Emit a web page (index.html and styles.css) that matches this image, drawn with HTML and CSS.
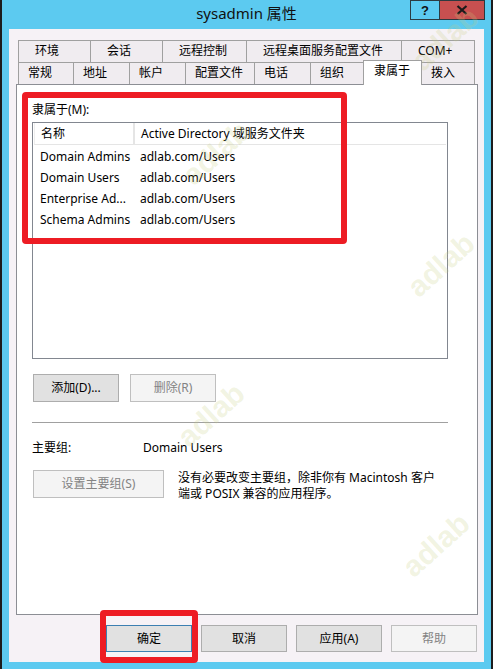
FILE: index.html
```html
<!DOCTYPE html>
<html lang="zh-CN">
<head>
<meta charset="utf-8">
<title>sysadmin 属性</title>
<link rel="stylesheet" href="styles.css">
</head>
<body>
<div class="window">
  <div class="titlebar">
    <div></div>
    <div class="title">sysadmin 属性</div>
    <div class="tbtns">
      <div class="tbtn help">?</div>
      <div class="tbtn close">
        <svg width="12" height="10" viewBox="0 0 12 10"><path d="M1.5 1 L10.5 9 M10.5 1 L1.5 9" stroke="#1a1a1a" stroke-width="2.2" fill="none"/></svg>
      </div>
    </div>
  </div>
  <div class="dialog">
    <div class="tabs">
      <div class="tabrow row1">
        <div class="tab">环境</div>
        <div class="tab">会话</div>
        <div class="tab">远程控制</div>
        <div class="tab">远程桌面服务配置文件</div>
        <div class="tab last">COM+</div>
      </div>
      <div class="tabrow row2">
        <div class="tab">常规</div>
        <div class="tab">地址</div>
        <div class="tab">帐户</div>
        <div class="tab">配置文件</div>
        <div class="tab">电话</div>
        <div class="tab">组织</div>
        <div class="tab active">隶属于</div>
        <div class="tab last">拨入</div>
      </div>
    </div>
    <div class="panel">
      <div class="label">隶属于(M):</div>
      <div class="listview">
        <div class="lv-header">
          <div class="c1">名称</div>
          <div class="c2">Active Directory 域服务文件夹</div>
        </div>
        <div class="lv-row"><div class="c1">Domain Admins</div><div class="c2">adlab.com/Users</div></div>
        <div class="lv-row"><div class="c1">Domain Users</div><div class="c2">adlab.com/Users</div></div>
        <div class="lv-row"><div class="c1">Enterprise Ad...</div><div class="c2">adlab.com/Users</div></div>
        <div class="lv-row"><div class="c1">Schema Admins</div><div class="c2">adlab.com/Users</div></div>
      </div>
      <div class="btnrow">
        <div class="btn">添加(D)...</div>
        <div class="btn disabled">删除(R)</div>
      </div>
      <div class="sep"></div>
      <div class="primary">
        <div class="plabel">主要组:</div>
        <div>Domain Users</div>
      </div>
      <div class="setrow">
        <div class="btn disabled setbtn">设置主要组(S)</div>
        <div class="note">没有必要改变主要组，除非你有 Macintosh 客户<br>端或 POSIX 兼容的应用程序。</div>
      </div>
    </div>
    <div class="footer">
      <div class="btn default">确定</div>
      <div class="btn">取消</div>
      <div class="btn">应用(A)</div>
      <div class="btn disabled">帮助</div>
    </div>
  </div>
  <div class="mark box1"></div>
  <div class="mark box2"></div>
  <div class="wm wm1">adlab</div>
  <div class="wm wm2">adlab</div>
  <div class="wm wm3">adlab</div>
  <div class="wm wm4">adlab</div>
  <div class="wm wm5">adlab</div>
</div>
</body>
</html>
```

FILE: styles.css
```css
* { box-sizing: border-box; }
html, body {
  margin: 0;
  padding: 0;
  background: #1c1c1c;
  width: 493px;
  height: 669px;
  overflow: hidden;
}
body {
  font-family: "Noto Sans", "Noto Sans CJK SC", sans-serif;
  font-size: 12px;
  color: #000;
}
.window {
  position: relative;
  margin: 0 2px;
  width: 489px;
  height: 669px;
  background: #5ccaf0;
  display: flex;
  flex-direction: column;
  overflow: hidden;
}
.titlebar {
  height: 29px;
  display: grid;
  grid-template-columns: 1fr auto 1fr;
  align-items: start;
}
.title {
  font-family: "Noto Sans", "Noto Sans CJK SC", sans-serif;
  font-size: 15px;
  line-height: 27px;
  color: #111;
}
.tbtns {
  justify-self: end;
  display: flex;
  margin-right: 6px;
}
.tbtn {
  height: 20px;
  border: 1px solid #2c3a40;
  display: flex;
  align-items: center;
  justify-content: center;
}
.tbtn.help {
  width: 29px;
  border-right: none;
  font-family: "Liberation Sans", sans-serif;
  font-weight: bold;
  font-size: 13px;
  color: #111;
}
.tbtn.close {
  width: 46px;
  background: #c75050;
}
.dialog {
  margin: 0 7px;
  height: 633px;
  background: #f6f2f6;
  padding: 11px 7px 0 7px;
  display: flex;
  flex-direction: column;
}
.tabs {
  margin-left: 2px;
  width: 457px;
}
.tabrow {
  display: grid;
  height: 22px;
}
.row1 { grid-template-columns: 72px 72px 84px 155px 74px; }
.row2 { grid-template-columns: 55px 56px 56px 69px 56px 53px 59px 53px; }
.tab {
  border-top: 1px solid #a0a0a0;
  border-left: 1px solid #a0a0a0;
  background: #f0ecf0;
  display: flex;
  align-items: center;
  justify-content: flex-start;
  padding-left: 16px;
  line-height: 16px;
  padding-bottom: 1px;
}
.row2 .tab { padding-left: 9px; }
.tab.last { border-right: 1px solid #a0a0a0; }
.tab.active {
  background: #fff;
  border-right: 1px solid #a0a0a0;
  margin-top: -2px;
  margin-bottom: -1px;
  position: relative;
  z-index: 1;
  padding-left: 10px;
  padding-bottom: 4px;
}
.tab.active + .tab { border-left: none; }
.panel {
  width: 462px;
  height: 531px;
  background: #fff;
  border: 1px solid #8c8e94;
  padding: 17px 15px 0 15px;
}
.label { line-height: 16px; }
.listview {
  margin-top: 4px;
  width: 416px;
  height: 237px;
  border: 1px solid #828790;
  padding: 0 1px;
}
.lv-header {
  display: flex;
  height: 22px;
  border-bottom: 1px solid #e5e5e5;
  border-left: 1px solid #eee;
}
.lv-header .c1 { border-right: 2px solid #e5e5e5; }
.c1 { width: 100px; padding-left: 6px; white-space: nowrap; overflow: hidden; }
.c2 { padding-left: 6px; white-space: nowrap; }
.lv-header > div { line-height: 21px; }
.lv-row {
  display: flex;
  height: 21px;
  line-height: 21px;
}
.lv-header + .lv-row { margin-top: 1px; }
.btnrow {
  margin-top: 15px;
  display: flex;
  gap: 11px;
  padding-left: 1px;
}
.btn {
  width: 86px;
  height: 28px;
  background: #e1e1e1;
  border: 1px solid #adadad;
  display: flex;
  align-items: center;
  justify-content: center;
  line-height: 16px;
}
.btn.disabled {
  background: #f4f4f4;
  border-color: #bfbfbf;
  color: #838383;
}
.btn.default { border-color: #3c7fb1; }
.sep {
  margin-top: 20px;
  width: 416px;
  border-top: 1px solid #a0a0a0;
}
.primary {
  margin-top: 17px;
  display: flex;
  line-height: 16px;
}
.plabel { width: 111px; }
.setrow {
  margin-top: 14px;
  display: flex;
  gap: 14px;
  padding-left: 1px;
}
.setbtn { width: 131px; }
.note { line-height: 16px; }
.footer {
  margin-top: 10px;
  display: flex;
  justify-content: flex-end;
  gap: 9px;
  height: 27px;
}
.footer .btn { height: 27px; }
.mark {
  position: absolute;
  border: 6px solid #ed1c24;
  border-radius: 4px;
  pointer-events: none;
}
.box1 { left: 20px; top: 92px; width: 325px; height: 152px; }
.box2 { left: 98px; top: 610px; width: 98px; height: 53px; }
.wm {
  position: absolute;
  font-family: "Liberation Sans", sans-serif;
  font-weight: bold;
  font-size: 30px;
  color: rgba(200, 205, 130, 0.24);
  transform: rotate(-42deg);
  pointer-events: none;
  line-height: 30px;
}
.wm1 { left: 400px; top: 250px; }
.wm2 { left: 175px; top: 138px; }
.wm3 { left: 170px; top: 400px; }
.wm4 { left: 395px; top: 530px; }
.wm5 { left: 404px; top: 24px; }
```
